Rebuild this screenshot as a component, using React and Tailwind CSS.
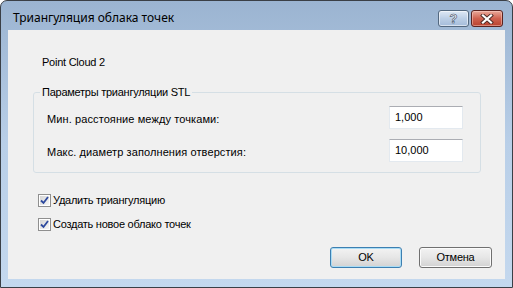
import React from "react";

const body = { fontFamily: '"Liberation Sans", Arial, sans-serif' };

function TitleButton({ kind }) {
  if (kind === "help") {
    return (
      <div className="w-[31px] h-[17px] rounded-[3px] border border-[#53687f] bg-gradient-to-b from-[#dfe9f5] via-[#bccfe6] to-[#a4bcda] flex items-center justify-center shadow-[inset_0_0_0_1px_rgba(255,255,255,0.55)]">
        <span
          className="text-[13px] font-bold leading-none text-white"
          style={{ ...body, WebkitTextStroke: "0.6px #3b4a5e" }}
        >
          ?
        </span>
      </div>
    );
  }
  return (
    <div className="w-[32px] h-[17px] rounded-[3px] border border-[#5a2320] bg-gradient-to-b from-[#e9a99b] via-[#cf6250] to-[#b8402d] flex items-center justify-center shadow-[inset_0_0_0_1px_rgba(255,220,210,0.45)]">
      <svg width="14" height="10" viewBox="0 0 14 10">
        <path d="M3 1.5 L11 8.5 M11 1.5 L3 8.5" stroke="#4a2a26" strokeWidth="4" strokeLinecap="square" />
        <path d="M3 1.5 L11 8.5 M11 1.5 L3 8.5" stroke="#ffffff" strokeWidth="2.2" strokeLinecap="square" />
      </svg>
    </div>
  );
}

function Field({ label, value }) {
  return (
    <div className="flex items-center justify-between h-[23px]">
      <span className="pt-[4px] tracking-[0.1px]">{label}</span>
      <div className="w-[74px] h-[23px] bg-white border border-[#e3e9ef] border-t-[#abadb3] flex items-center pl-[5px] tracking-normal">
        {value}
      </div>
    </div>
  );
}

function Check({ label }) {
  return (
    <label className="flex items-center h-[13px] gap-[2px]">
      <span className="w-[13px] h-[13px] border border-[#8f8f8f] bg-white p-[1px] flex">
        <span className="flex-1 bg-gradient-to-br from-[#d6d6d6] to-[#f6f6f6] flex items-center justify-center">
          <svg width="9" height="9" viewBox="0 0 9 9">
            <path d="M1 4.5 L3.5 7 L8 1" stroke="#2e4a9e" strokeWidth="1.8" fill="none" />
          </svg>
        </span>
      </span>
      <span>{label}</span>
    </label>
  );
}

function Button({ children, focused, width }) {
  return (
    <div
      className={
        "h-[21px] rounded-[3px] border flex items-center justify-center bg-gradient-to-b from-[#f3f3f3] via-[#e6e6e6] to-[#d2d2d2] " +
        (focused
          ? "border-[#3c7fb1] shadow-[inset_0_0_0_1px_#a9dcf5]"
          : "border-[#707070] shadow-[inset_0_0_0_1px_#fbfbfb]") +
        " " +
        width
      }
    >
      {children}
    </div>
  );
}

export default function App() {
  return (
    <div className="w-[513px] h-[288px] bg-white">
      <div className="w-[513px] h-[288px] flex flex-col rounded-t-[7px] border border-[#3a3f46] bg-gradient-to-b from-[#9bb4d1] via-[#b9cfe8] to-[#c4d8ee] overflow-hidden">
        {/* title bar */}
        <div className="h-[29px] flex items-start pl-[12px] pr-[9px]">
          <span
            className="mt-[9px] text-[12px] leading-[16px] text-black flex-1"
            style={{ fontFamily: '"Noto Sans", "Liberation Sans", sans-serif' }}
          >
            Триангуляция облака точек
          </span>
          <div className="mt-[9px] flex gap-[2px]">
            <TitleButton kind="help" />
            <TitleButton kind="close" />
          </div>
        </div>

        {/* client area */}
        <div
          className="mx-[7px] h-[249px] bg-[#f0f0f0] text-[11px] leading-[13px] tracking-[-0.25px] text-black flex flex-col"
          style={body}
        >
          <div className="pt-[26px] pl-[34px]">Point Cloud 2</div>

          <fieldset className="mt-[17px] ml-[25px] w-[448px] rounded-[3px] border border-[#d5dfe5] pb-[10px]">
            <legend className="ml-[6px] px-[2px]">Параметры триангуляции STL</legend>
            <div className="pl-[13px] pr-[17px] pt-[7px] flex flex-col gap-[10px]">
              <Field label="Мин. расстояние между точками:" value="1,000" />
              <Field label="Макс. диаметр заполнения отверстия:" value="10,000" />
            </div>
          </fieldset>

          <div className="mt-[21px] ml-[30px] flex flex-col gap-[11px]">
            <Check label="Удалить триангуляцию" />
            <Check label="Создать новое облако точек" />
          </div>

          <div className="mt-[16px] pr-[13px] flex justify-end gap-[17px]">
            <Button focused width="w-[72px]">OK</Button>
            <Button width="w-[73px]">Отмена</Button>
          </div>
        </div>
      </div>
    </div>
  );
}
